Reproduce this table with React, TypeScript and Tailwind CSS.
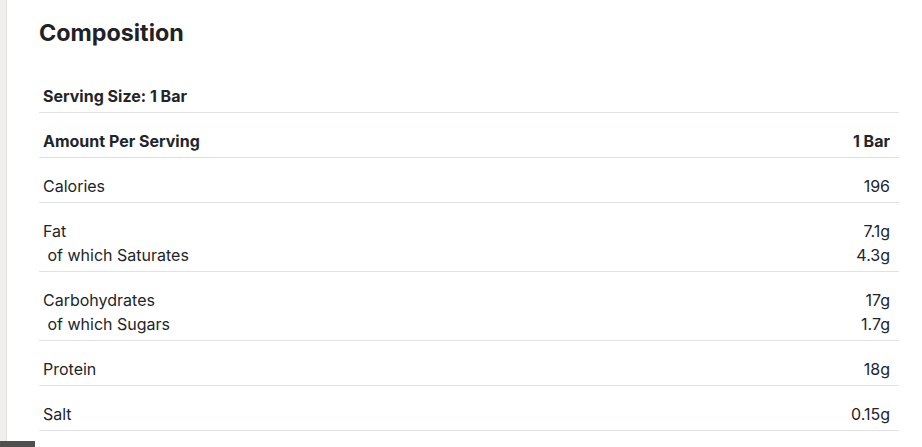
import React from "react";

interface Row {
  labels: string[];
  values: string[];
  bold?: boolean;
}

const rows: Row[] = [
  { labels: ["Amount Per Serving"], values: ["1 Bar"], bold: true },
  { labels: ["Calories"], values: ["196"] },
  { labels: ["Fat", "\u00a0of which Saturates"], values: ["7.1g", "4.3g"] },
  { labels: ["Carbohydrates", "\u00a0of which Sugars"], values: ["17g", "1.7g"] },
  { labels: ["Protein"], values: ["18g"] },
  { labels: ["Salt"], values: ["0.15g"] },
];

const App = () => {
  return (
    <div
      className="relative flex h-[447px] w-full overflow-hidden bg-white text-[#212529]"
      style={{ fontFamily: "Inter, 'Noto Sans', sans-serif" }}
    >
      {/* left gutter of the host page */}
      <div className="h-full w-[6px] bg-[#f1eeee]" />
      <div className="h-full w-px bg-[#e3dfdf]" />

      <div className="flex-1 pl-[32px] pr-[23px]">
        <h2 className="mt-[17px] text-[23.3px] font-bold leading-8 text-[#1f2226]">
          Composition
        </h2>

        <div className="mt-[19px] text-[16px] leading-6">
          <div className="border-b border-[#dee2e6] pb-[4px] pl-1 pt-[16px] font-bold">
            Serving Size: 1 Bar
          </div>
          {rows.map((row, i) => (
            <div
              key={i}
              className={`flex justify-between border-b border-[#dee2e6] pb-[4px] pl-1 pr-[9px] pt-[16px] ${
                row.bold ? "font-bold" : ""
              }`}
            >
              <div className="flex flex-col">
                {row.labels.map((l) => (
                  <span key={l}>{l}</span>
                ))}
              </div>
              <div className="flex flex-col items-end">
                {row.values.map((v) => (
                  <span key={v}>{v}</span>
                ))}
              </div>
            </div>
          ))}
        </div>
      </div>

      {/* dock bar peeking in at the bottom */}
      <div className="absolute bottom-0 left-0 h-[6px] w-[35px] bg-[#4f4f4f]" />
    </div>
  );
};

export default App;
